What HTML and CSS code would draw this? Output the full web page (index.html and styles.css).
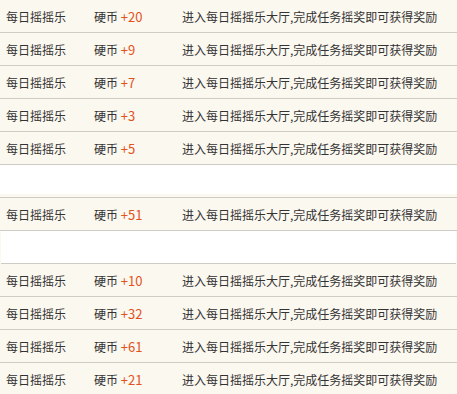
FILE: index.html
```html
<!DOCTYPE html>
<html lang="zh-CN">
<head>
<meta charset="utf-8">
<link rel="stylesheet" href="styles.css">
</head>
<body>
<div class="list">
  <div class="row"><span class="c1">每日摇摇乐</span><span class="c2">硬币 <em>+20</em></span><span class="c3">进入每日摇摇乐大厅,完成任务摇奖即可获得奖励</span></div>
  <div class="row"><span class="c1">每日摇摇乐</span><span class="c2">硬币 <em>+9</em></span><span class="c3">进入每日摇摇乐大厅,完成任务摇奖即可获得奖励</span></div>
  <div class="row"><span class="c1">每日摇摇乐</span><span class="c2">硬币 <em>+7</em></span><span class="c3">进入每日摇摇乐大厅,完成任务摇奖即可获得奖励</span></div>
  <div class="row"><span class="c1">每日摇摇乐</span><span class="c2">硬币 <em>+3</em></span><span class="c3">进入每日摇摇乐大厅,完成任务摇奖即可获得奖励</span></div>
  <div class="row"><span class="c1">每日摇摇乐</span><span class="c2">硬币 <em>+5</em></span><span class="c3">进入每日摇摇乐大厅,完成任务摇奖即可获得奖励</span></div>
  <div class="row empty first-empty"></div>
  <div class="row"><span class="c1">每日摇摇乐</span><span class="c2">硬币 <em>+51</em></span><span class="c3">进入每日摇摇乐大厅,完成任务摇奖即可获得奖励</span></div>
  <div class="row empty"></div>
  <div class="row"><span class="c1">每日摇摇乐</span><span class="c2">硬币 <em>+10</em></span><span class="c3">进入每日摇摇乐大厅,完成任务摇奖即可获得奖励</span></div>
  <div class="row"><span class="c1">每日摇摇乐</span><span class="c2">硬币 <em>+32</em></span><span class="c3">进入每日摇摇乐大厅,完成任务摇奖即可获得奖励</span></div>
  <div class="row"><span class="c1">每日摇摇乐</span><span class="c2">硬币 <em>+61</em></span><span class="c3">进入每日摇摇乐大厅,完成任务摇奖即可获得奖励</span></div>
  <div class="row"><span class="c1">每日摇摇乐</span><span class="c2">硬币 <em>+21</em></span><span class="c3">进入每日摇摇乐大厅,完成任务摇奖即可获得奖励</span></div>
</div>
</body>
</html>
```

FILE: styles.css
```css
html, body {
  margin: 0;
  padding: 0;
  background: #fbf8f0;
}
body {
  font-family: "Noto Sans CJK SC", "Microsoft YaHei", sans-serif;
  font-size: 12px;
  color: #333333;
}
.list {
  display: flex;
  flex-direction: column;
  width: 457px;
}
.row {
  display: flex;
  align-items: center;
  height: 32px;
  border-bottom: 1px solid #cfccc6;
  padding-left: 6px;
  box-sizing: content-box;
  white-space: nowrap;
}
.c1 {
  width: 88px;
}
.c2 {
  width: 88px;
}
.c2 em {
  font-style: normal;
  font-size: 13px;
  color: #e2521c;
}
.empty {
  background: #ffffff;
  margin: 0 1px;
  padding-left: 0;
}
.first-empty {
  margin: 0;
  box-shadow: inset 0 -3px 0 #fbf8f0;
}
```
